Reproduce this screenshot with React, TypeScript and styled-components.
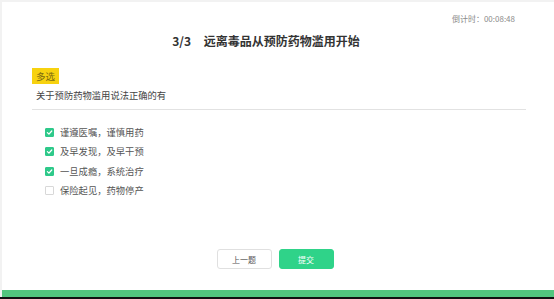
import React from "react";
import styled, { createGlobalStyle } from "styled-components";

const Global = createGlobalStyle`
  html, body { margin: 0; padding: 0; background: #f2f2f2; }
  body { font-family: "Noto Sans CJK SC", "Noto Sans", sans-serif; }
  * { box-sizing: border-box; }
`;

const Page = styled.div`
  width: 554px;
  height: 299px;
  padding: 2px 0 0 2px;
  display: flex;
  flex-direction: column;
  background: #f2f2f2;
  border-bottom: 2px solid #111;
`;

const Panel = styled.div`
  flex: 1;
  background: #fff;
  display: flex;
  flex-direction: column;
  padding: 0 28px 0 30px;
`;

const Timer = styled.div`
  align-self: flex-end;
  margin-top: 11px;
  margin-right: 11px;
  font-size: 8px;
  line-height: 12px;
  color: #8a8a8a;
`;

const Title = styled.h1`
  margin: 7px 0 0;
  padding-right: 26px;
  text-align: center;
  font-size: 12px;
  line-height: 18px;
  font-weight: 700;
  color: #333;
  word-spacing: 10px;
`;

const Badge = styled.span`
  align-self: flex-start;
  margin-top: 18px;
  background: #f7d20f;
  color: #7a6a10;
  font-size: 9.5px;
  line-height: 16px;
  padding: 0 4px;
`;

const Question = styled.div`
  margin-top: 5px;
  padding: 0 0 7px 4px;
  font-size: 9.3px;
  line-height: 13px;
  color: #444;
  border-bottom: 1px solid #e2e2e2;
`;

const Options = styled.div`
  display: flex;
  flex-direction: column;
  gap: 6.3px;
  margin-top: 16px;
  padding-left: 13px;
`;

const Option = styled.label`
  display: flex;
  align-items: center;
  gap: 6px;
  font-size: 9.3px;
  line-height: 13px;
  color: #555;
`;

const Box = styled.span<{ $checked: boolean }>`
  width: 9px;
  height: 9px;
  border-radius: 1px;
  display: flex;
  align-items: center;
  justify-content: center;
  background: ${(p) => (p.$checked ? "#2ec98a" : "#fff")};
  border: 1px solid ${(p) => (p.$checked ? "#2ec98a" : "#d8d8d8")};
`;

const Actions = styled.div`
  display: flex;
  justify-content: center;
  gap: 7px;
  margin-top: auto;
  margin-bottom: 21px;
  padding-right: 8px;
`;

const Button = styled.button<{ $primary?: boolean }>`
  width: 55px;
  height: 20px;
  border-radius: 3px;
  font-family: inherit;
  font-size: 8px;
  padding: 0;
  cursor: pointer;
  color: ${(p) => (p.$primary ? "#fff" : "#555")};
  background: ${(p) => (p.$primary ? "#2fd389" : "#fff")};
  border: 1px solid ${(p) => (p.$primary ? "#2fd389" : "#e0e0e0")};
`;

const Progress = styled.div`
  height: 7px;
  background: #52c67e;
`;

const Check = () => (
  <svg width="7" height="7" viewBox="0 0 10 10">
    <path d="M2 5.2 L4.2 7.3 L8.2 2.8" fill="none" stroke="#fff" strokeWidth="1.8" strokeLinecap="round" strokeLinejoin="round" />
  </svg>
);

const options = [
  { text: "谨遵医嘱，谨慎用药", checked: true },
  { text: "及早发现，及早干预", checked: true },
  { text: "一旦成瘾，系统治疗", checked: true },
  { text: "保险起见，药物停产", checked: false },
];

export default function App() {
  return (
    <>
      <Global />
      <Page>
        <Panel>
          <Timer>倒计时：00:08:48</Timer>
          <Title>3/3 远离毒品从预防药物滥用开始</Title>
          <Badge>多选</Badge>
          <Question>关于预防药物滥用说法正确的有</Question>
          <Options>
            {options.map((o) => (
              <Option key={o.text}>
                <Box $checked={o.checked}>{o.checked && <Check />}</Box>
                {o.text}
              </Option>
            ))}
          </Options>
          <Actions>
            <Button>上一题</Button>
            <Button $primary>提交</Button>
          </Actions>
        </Panel>
        <Progress />
      </Page>
    </>
  );
}
